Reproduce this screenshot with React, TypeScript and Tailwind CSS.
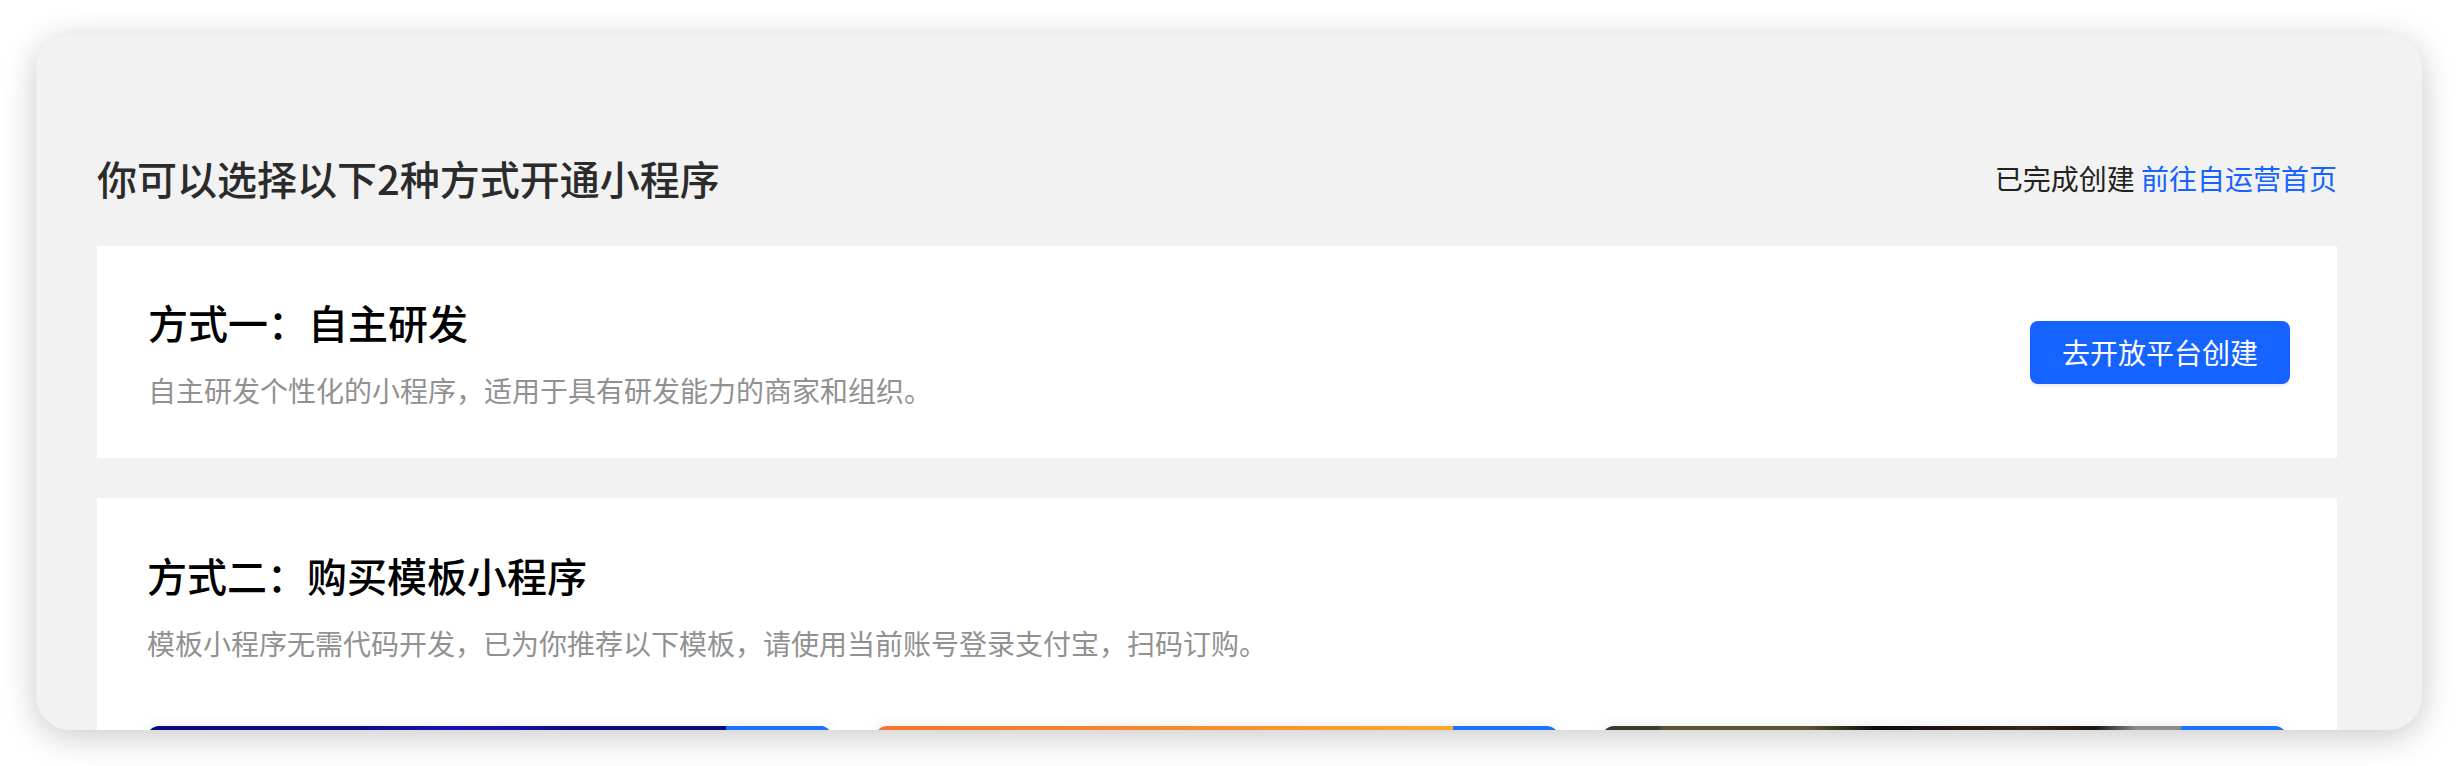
const templates = [
    {
        name: '品牌官网模板',
        tag: '热门',
        cover: 'bg-[linear-gradient(90deg,#0b0a7c_0%,#0c0a82_30%,#1a12b4_45%,#140fa0_55%,#0b0a7c_62%,#0a0876_100%)]',
    },
    {
        name: '零售商城模板',
        tag: '推荐',
        cover: 'bg-[linear-gradient(90deg,#f7732f_0%,#f88a2e_45%,#fab52a_100%)]',
    },
    {
        name: '餐饮点单模板',
        tag: '新品',
        cover: 'bg-[linear-gradient(90deg,#3b3b30_0%,#3b3b30_8%,#5a5632_9%,#5a5632_30%,#0c0c0c_40%,#2c1c16_55%,#3a2618_62%,#1a1410_72%,#8c8c8c_78%,#8c8c8c_100%)]',
    },
];

function TemplateCard({ name, tag, cover }: { name: string; tag: string; cover: string }) {
    return (
        <div className="flex flex-col rounded-t-[12px] bg-white shadow-[0_0_16px_rgba(0,0,0,0.08)] overflow-hidden">
            <div className={`relative h-[220px] ${cover}`}>
                <div className="absolute right-0 top-0 w-[106px] h-[44px] bg-[#1a74ff] rounded-tr-[12px] flex items-center justify-center text-[22px] text-white">
                    {tag}
                </div>
            </div>
            <div className="px-6 py-5 text-[28px] text-[#222]">{name}</div>
        </div>
    );
}

export default function App() {
    return (
        <div
            className="w-[2458px] h-[766px] bg-white pt-[35px] pb-[36px] px-[36px]"
            style={{ fontFamily: '"Noto Sans CJK SC", "Noto Sans", sans-serif' }}
        >
            <div className="h-full rounded-[34px] bg-[#f2f2f2] shadow-[0_6px_34px_rgba(0,0,0,0.22)] overflow-hidden pt-[114px] pl-[61px] pr-[85px]">
                <div className="flex items-center justify-between h-[58px]">
                    <h1 className="text-[40px] leading-[58px] font-medium text-[#2b2b2b]">
                        你可以选择以下2种方式开通小程序
                    </h1>
                    <div className="text-[28px] leading-[40px] text-[#222]">
                        已完成创建 <a className="text-[#1664ff]">前往自运营首页</a>
                    </div>
                </div>

                <div className="mt-[39px] bg-white h-[212px] pl-[51px] pr-[47px] flex items-center justify-between">
                    <div className="flex flex-col">
                        <h2 className="text-[40px] leading-[56px] font-medium text-black">方式一：自主研发</h2>
                        <p className="mt-[20px] text-[28px] leading-[40px] text-[#919191]">
                            自主研发个性化的小程序，适用于具有研发能力的商家和组织。
                        </p>
                    </div>
                    <button className="w-[260px] h-[63px] rounded-[8px] bg-[#1664ff] text-white text-[28px] shadow-[0_3px_2px_rgba(0,0,0,0.05)]">
                        去开放平台创建
                    </button>
                </div>

                <div className="mt-[40px] bg-white pt-[49px] px-[50px] pb-10">
                    <h2 className="text-[40px] leading-[56px] font-medium text-black">方式二：购买模板小程序</h2>
                    <p className="mt-[20px] text-[28px] leading-[40px] text-[#919191]">
                        模板小程序无需代码开发，已为你推荐以下模板，请使用当前账号登录支付宝，扫码订购。
                    </p>
                    <div className="mt-[63px] grid grid-cols-3 gap-[43px]">
                        {templates.map((t) => (
                            <TemplateCard key={t.name} {...t} />
                        ))}
                    </div>
                </div>
            </div>
        </div>
    );
}
